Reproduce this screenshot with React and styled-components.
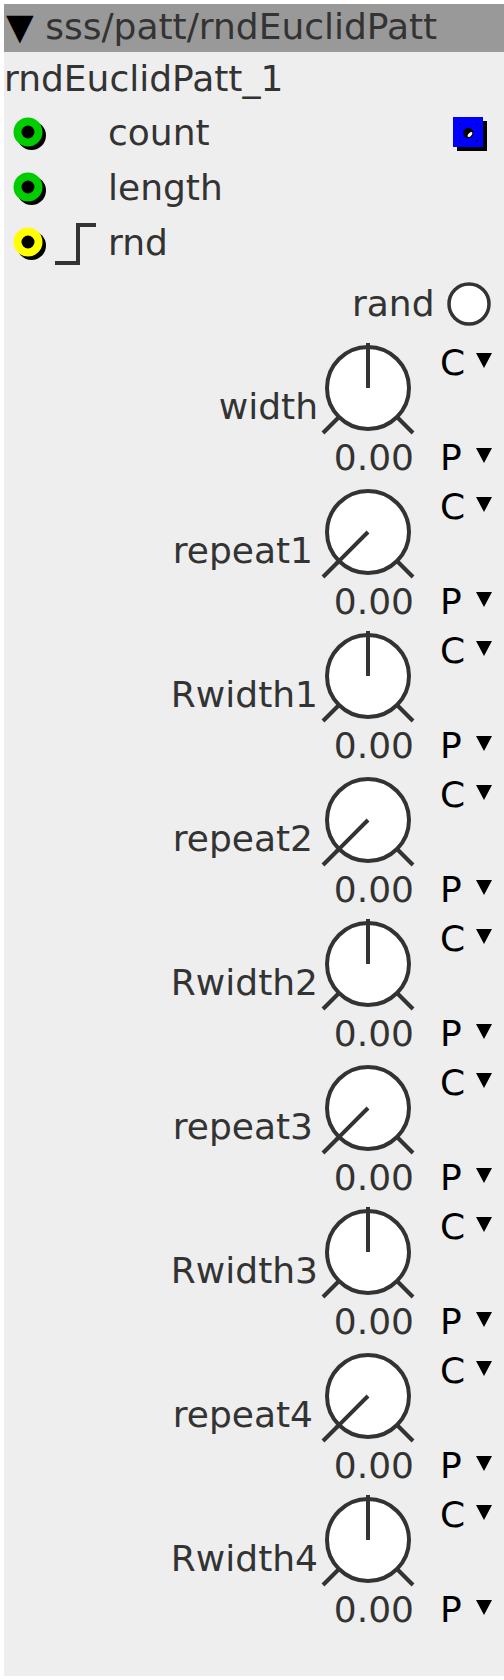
import React from "react";
import styled, { createGlobalStyle } from "styled-components";

const GlobalStyle = createGlobalStyle`
  html, body {
    margin: 0;
    padding: 0;
    background: #ffffff;
  }
  body {
    font-family: "DejaVu Sans", "Liberation Sans", sans-serif;
  }
`;

const Panel = styled.div`
  margin: 4px 0 0 4px;
  width: 500px;
  padding-bottom: 42px;
  background: #eeeeee;
  color: #333333;
  font-size: 36px;
`;

const Header = styled.div`
  height: 48px;
  line-height: 46px;
  padding-left: 2px;
  background: #999999;
  white-space: nowrap;
  overflow: hidden;
  .caret {
    color: #000000;
  }
`;

const InstanceName = styled.div`
  height: 53px;
  line-height: 53px;
  white-space: nowrap;
`;

const InletRow = styled.div`
  display: flex;
  align-items: center;
  height: 55px;
  padding-left: 6px;
`;

const TypeSlot = styled.div`
  display: flex;
  align-items: center;
  width: 58px;
  height: 55px;
`;

const InletLabel = styled.span`
  line-height: 55px;
`;

const ToggleBox = styled.svg`
  margin-left: auto;
  margin-right: 14px;
`;

const RandRow = styled.div`
  display: flex;
  justify-content: flex-end;
  align-items: center;
  height: 68px;
  span {
    line-height: 68px;
  }
  svg {
    margin: 0 12.5px 0 11px;
  }
`;

const KnobRow = styled.div`
  display: flex;
  justify-content: flex-end;
  height: 144px;
`;

const KnobLabel = styled.div`
  padding-top: 49px;
  margin-right: ${(p) => (p.$inset ? "5px" : "0")};
  line-height: 40px;
  white-space: nowrap;
`;

const KnobColumn = styled.div`
  display: flex;
  flex-direction: column;
  width: 100px;
  svg {
    margin-top: 2px;
  }
`;

const Value = styled.div`
  margin-top: 2px;
  padding-right: 4px;
  line-height: 40px;
  text-align: right;
`;

const ModeColumn = styled.div`
  display: flex;
  flex-direction: column;
  gap: 55px;
  width: 64px;
  margin-left: 22px;
  padding-top: 5px;
`;

const ModeItem = styled.div`
  display: flex;
  align-items: flex-start;
  height: 40px;
  line-height: 40px;
  color: #000000;
  span {
    width: 36px;
  }
`;

const Arrow = styled.i`
  width: 0;
  height: 0;
  margin-top: 10px;
  border-left: 8px solid transparent;
  border-right: 8px solid transparent;
  border-top: 15px solid #000000;
`;

const Jack = ({ color }) => (
  <svg width="40" height="40">
    <circle cx="21.5" cy="22.5" r="14.5" fill="#000" />
    <circle cx="18" cy="19" r="7" fill="#000" />
    <circle cx="18" cy="19" r="10.5" fill="none" stroke={color} strokeWidth="8" />
  </svg>
);

const Knob = ({ angle }) => {
  const rad = (angle * Math.PI) / 180;
  const x2 = 50 + 45 * Math.sin(rad);
  const y2 = 48 - 45 * Math.cos(rad);
  return (
    <svg width="100" height="96">
      <g stroke="#333" strokeWidth="4" fill="none">
        <line x1="21" y1="77" x2="5" y2="93" />
        <line x1="79" y1="77" x2="95" y2="93" />
        <circle cx="50" cy="48" r="41" fill="#fff" />
        <line x1="50" y1="48" x2={x2} y2={y2} />
      </g>
    </svg>
  );
};

const inlets = [
  { label: "count", color: "#00cc00" },
  { label: "length", color: "#00cc00" },
  { label: "rnd", color: "#ffff00", step: true },
];

const knobs = [
  { label: "width", angle: 0 },
  { label: "repeat1", angle: -135 },
  { label: "Rwidth1", angle: 0 },
  { label: "repeat2", angle: -135 },
  { label: "Rwidth2", angle: 0 },
  { label: "repeat3", angle: -135 },
  { label: "Rwidth3", angle: 0 },
  { label: "repeat4", angle: -135 },
  { label: "Rwidth4", angle: 0 },
];

export default function App() {
  return (
    <>
      <GlobalStyle />
      <Panel>
        <Header>
          <span className="caret">▼</span> sss/patt/rndEuclidPatt
        </Header>
        <InstanceName>rndEuclidPatt_1</InstanceName>

        {/* inlets */}
        {inlets.map((inlet, index) => (
          <InletRow key={inlet.label}>
            <Jack color={inlet.color} />
            <TypeSlot>
              {inlet.step && (
                <svg width="58" height="55">
                  <path d="M5 48 H28 V10 H46" fill="none" stroke="#333" strokeWidth="4" />
                </svg>
              )}
            </TypeSlot>
            <InletLabel>{inlet.label}</InletLabel>
            {index === 0 && (
              <ToggleBox width="40" height="40">
                <rect x="7" y="8" width="30" height="30" fill="#000" />
                <rect x="3" y="4" width="30" height="30" fill="#0000ff" />
                <g fill="#000">
                  <rect x="9.5" y="10.5" width="1.5" height="1.5" />
                  <rect x="26" y="10.5" width="1.5" height="1.5" />
                  <rect x="9.5" y="27" width="1.5" height="1.5" />
                  <rect x="26" y="27" width="1.5" height="1.5" />
                  <circle cx="18.3" cy="20" r="5.2" />
                </g>
                <ellipse cx="20" cy="21.5" rx="1.6" ry="3" fill="#fff" transform="rotate(40 20 21.5)" />
              </ToggleBox>
            )}
          </InletRow>
        ))}

        <RandRow>
          <span>rand</span>
          <svg width="46" height="46">
            <circle cx="23" cy="23" r="20" fill="#fff" stroke="#333" strokeWidth="3.5" />
          </svg>
        </RandRow>

        {/* knobs */}
        {knobs.map((knob) => (
          <KnobRow key={knob.label}>
            <KnobLabel $inset={knob.label.startsWith("repeat")}>{knob.label}</KnobLabel>
            <KnobColumn>
              <Knob angle={knob.angle} />
              <Value>0.00</Value>
            </KnobColumn>
            <ModeColumn>
              <ModeItem>
                <span>C</span>
                <Arrow />
              </ModeItem>
              <ModeItem>
                <span>P</span>
                <Arrow />
              </ModeItem>
            </ModeColumn>
          </KnobRow>
        ))}
      </Panel>
    </>
  );
}
